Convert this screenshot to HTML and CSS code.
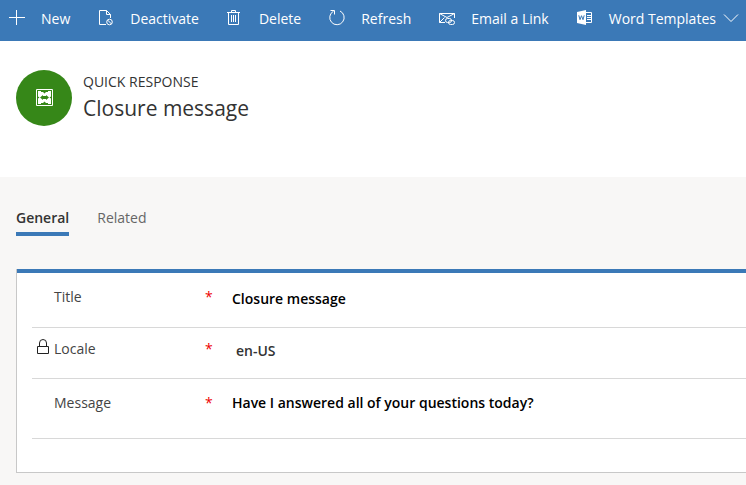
FILE: index.html
```html
<!DOCTYPE html>
<html lang="en">
<head>
<meta charset="utf-8">
<title>Quick Response: Closure message</title>
<meta name="viewport" content="width=device-width, initial-scale=1">
<link rel="stylesheet" href="styles.css">
</head>
<body>
<nav class="commands" aria-label="Commands">
  <button class="command" type="button">
    <svg class="icon" viewBox="0 0 16 16" aria-hidden="true"><path d="M0 7.500h16M7.500 0v15"/></svg>
    New
  </button>
  <button class="command" type="button">
    <svg class="icon" viewBox="0 0 16 16" aria-hidden="true"><path d="M8 14.500H1.500V.5h7l4 4V8M8.500.5v4h4"/><circle cx="11.500" cy="12" r="2.800"/><path d="M9.500 10l4 4"/></svg>
    Deactivate
  </button>
  <button class="command" type="button">
    <svg class="icon" viewBox="0 0 16 16" aria-hidden="true"><path d="M0 2.500h13M4.500 2.500v-2h4v2M1.500 2.500v12h10v-12M4.500 5v7M6.500 5v7M8.500 5v7"/></svg>
    Delete
  </button>
  <button class="command" type="button">
    <svg class="icon" viewBox="0 0 16 16" aria-hidden="true"><path d="M11 1A7.200 7.200 0 1 1 4.500 1.200M1.500.5h4v4"/></svg>
    Refresh
  </button>
  <button class="command" type="button">
    <svg class="icon" viewBox="0 0 16 16" aria-hidden="true"><path d="M6 12.500H.5v-9h15V8M.5 3.500L8 7.500l7.500-4M.5 12.500l5-5"/><rect x="6.500" y="8.500" width="6" height="4" rx="2"/><rect x="9.500" y="10.500" width="6" height="4" rx="2"/></svg>
    Email a Link
  </button>
  <button class="command" type="button">
    <svg class="icon" viewBox="0 0 16 16" aria-hidden="true"><path class="solid" d="M0 2L9 0v15l-9-2z"/><path d="M9 2.500h5.500v10H9M10 5.500h4M10 7.500h4M10 9.500h4"/><path class="mark" d="M1.800 5.300l1.200 4.400 1.500-4 1.500 4 1.200-4.400"/></svg>
    Word Templates
    <svg class="icon chevron" viewBox="0 0 16 16" aria-hidden="true"><path d="M1 4.500l7 7 7-7"/></svg>
  </button>
</nav>
<header class="record">
  <svg class="avatar" viewBox="0 0 56 56" aria-hidden="true">
    <circle class="disc" cx="28" cy="28" r="28"/>
    <path class="frame" d="M20.500 19.500h16v16h-16z"/>
    <path class="shape" d="M22 21h3v2h-1v2h-2zM35 21h-3v2h1v2h2zM22 34h3v-2h-1v-2h-2zM35 34h-3v-2h1v-2h2z"/>
    <path class="shape" d="M24 22h3l1.500 1.500L30 22h3v2.500h2v2l-1.500 1 1.500 1v2h-2V33h-3l-1.500-1.500L27 33h-3v-2.500h-2v-2l1.500-1-1.500-1v-2h2z"/>
    <path class="disc" d="M24 27.500l3-2.500v1h3v-1l3 2.500-3 2.500v-1h-3v1z"/>
  </svg>
  <div>
    <p class="entity">QUICK RESPONSE</p>
    <h1 class="name">Closure message</h1>
  </div>
</header>
<main class="content">
  <nav class="tabs" aria-label="Record sections">
    <a class="tab current" href="#general" aria-current="page">General</a>
    <a class="tab" href="#related">Related</a>
  </nav>
  <form class="card" id="general">
    <div class="field">
      <span></span>
      <label for="title">Title</label>
      <span class="required" aria-hidden="true">*</span>
      <input class="value" id="title" type="text" value="Closure message" required>
    </div>
    <div class="field">
      <svg class="lock" viewBox="0 0 14 16" aria-hidden="true"><path d="M1.500 7.500h11v7h-11zM3.500 7.500V4a3.500 3.500 0 0 1 7 0v3.500"/></svg>
      <label for="locale">Locale</label>
      <span class="required" aria-hidden="true">*</span>
      <input class="value locked" id="locale" type="text" value="en-US" readonly>
    </div>
    <div class="field tall">
      <span></span>
      <label for="message">Message</label>
      <span class="required" aria-hidden="true">*</span>
      <input class="value" id="message" type="text" value="Have I answered all of your questions today?" required>
    </div>
  </form>
</main>
</body>
</html>
```
FILE: styles.css
```css
* {
  box-sizing: border-box;
}

body {
  margin: 0;
  min-height: 100vh;
  background: #f8f7f6;
  color: #333;
  font: 14px/20px "Segoe UI", "Open Sans", sans-serif;
  overflow-x: hidden;
}

p,
h1 {
  margin: 0;
  font-weight: 400;
}

.commands {
  display: flex;
  gap: 28px;
  padding: 9px 9px 12px;
  background: #3b79b7;
  overflow: hidden;
}

.command {
  display: flex;
  flex: none;
  align-items: center;
  gap: 16px;
  padding: 0;
  border: 0;
  background: none;
  color: #fff;
  font: inherit;
  white-space: nowrap;
}

.icon {
  flex: none;
  width: 16px;
  height: 16px;
  margin-bottom: 2px;
  fill: none;
  stroke: #fff;
}

.icon .solid {
  fill: #fff;
  stroke: none;
}

.icon .mark {
  stroke: #3b79b7;
}

.chevron {
  margin-left: -9px;
}

.record {
  display: flex;
  gap: 11px;
  padding: 29px 16px 51px;
  background: #fff;
}

.avatar {
  flex: none;
  width: 56px;
  height: 56px;
}

.disc {
  fill: #368718;
}

.frame {
  fill: none;
  stroke: #fff;
}

.shape {
  fill: #fff;
}

.entity {
  padding-top: 2px;
}

.name {
  font-size: 21px;
  line-height: 32px;
}

.content {
  padding: 31px 0 12px 16px;
}

.tabs {
  display: flex;
  gap: 28px;
}

.tab {
  padding-bottom: 4px;
  border-bottom: 4px solid transparent;
  color: #666;
  text-decoration: none;
}

.tab.current {
  border-color: #3b79b7;
  color: #333;
  font-weight: 600;
}

.card {
  margin-top: 33px;
  padding: 4px 0 33px 15px;
  border: solid #c8c8c8;
  border-width: 0 0 1px 1px;
  background: linear-gradient(#3b79b7, #3b79b7) top / 100% 4px no-repeat #fff;
}

.field {
  display: grid;
  grid-template-columns: 22px 151px 27px 1fr;
  min-height: 51px;
  padding-top: 11px;
  border-bottom: 1px solid #d8d8d8;
  color: #444;
}

.field:first-child {
  min-height: 55px;
  padding-top: 14px;
}

.field.tall {
  min-height: 60px;
  padding-top: 14px;
}

.lock {
  width: 14px;
  height: 16px;
  margin-left: 4px;
  fill: none;
  stroke: #222;
}

.required {
  color: #e00;
}

.value {
  width: 100%;
  height: 22px;
  padding: 0;
  border: 0;
  background: none;
  color: #000;
  font: inherit;
  font-weight: 600;
}

.tall .value {
  height: 20px;
}

.value.locked {
  padding-left: 4px;
  color: #333;
}
```
